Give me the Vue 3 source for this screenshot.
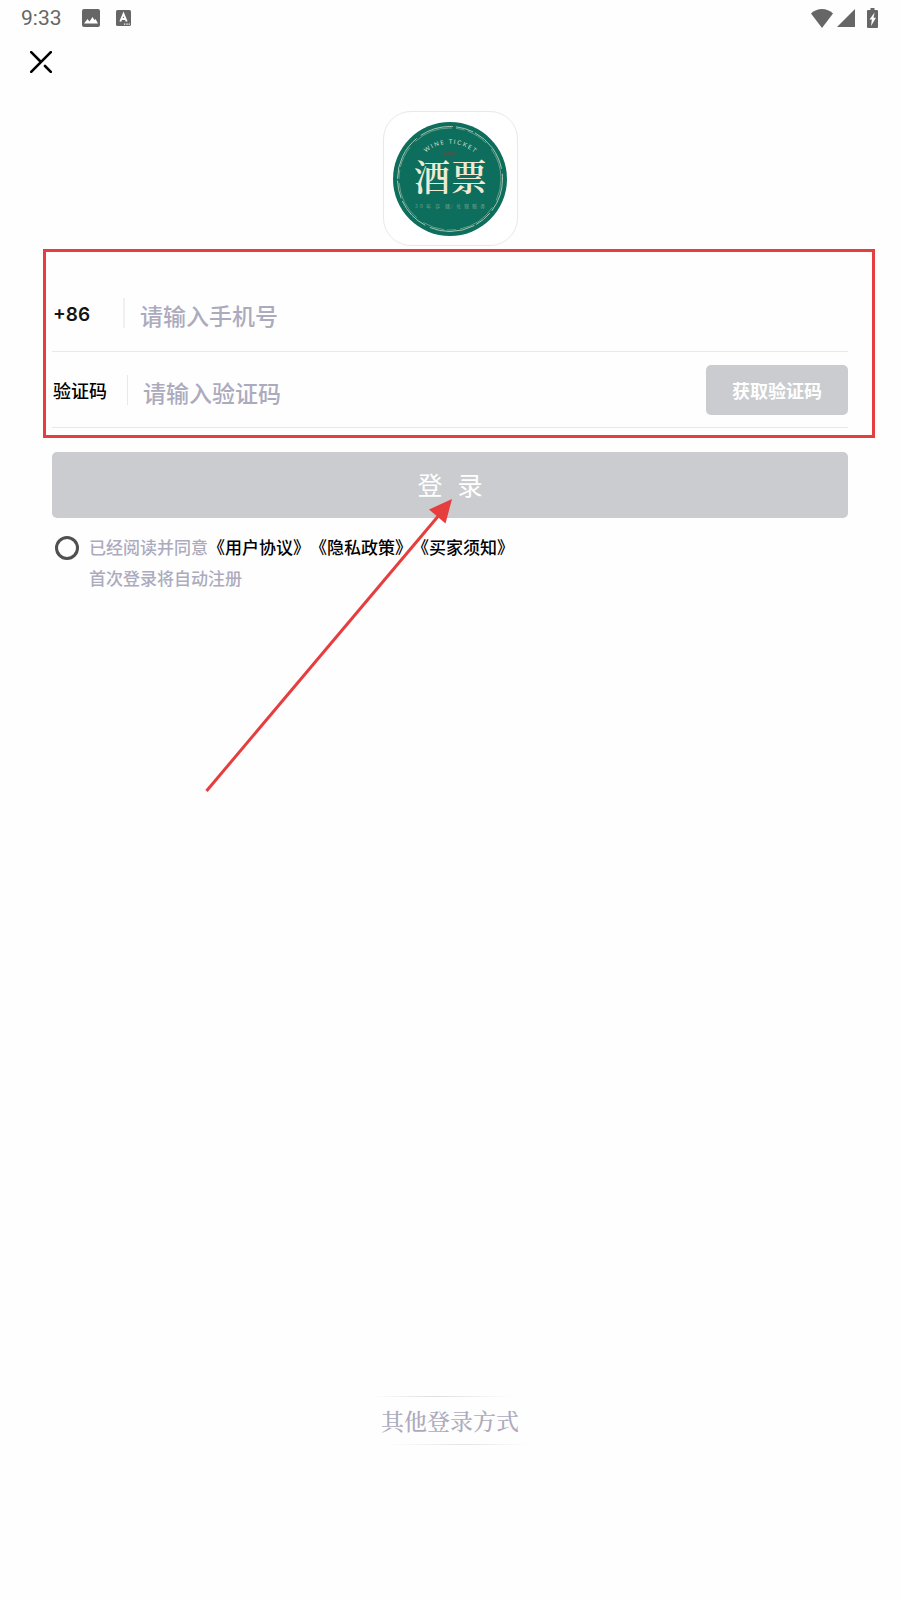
<script setup>
import { computed, ref } from 'vue'

const phone = ref('')
const code = ref('')
const agreed = ref(false)

const agreements = [
  { key: 'user', label: '《用户协议》' },
  { key: 'privacy', label: '《隐私政策》' },
  { key: 'buyer', label: '《买家须知》' }
]

const canLogin = computed(() => Boolean(phone.value.trim() && code.value.trim() && agreed.value))

function submitLogin() {
  if (!canLogin.value) {
    return
  }

  code.value = ''
}
</script>

<template>
  <div class="login-page">
    <header class="status-bar">
      <div class="status-bar__group">
        <span class="status-bar__time">9:33</span>
        <svg class="status-bar__image" viewBox="0 0 18 18" aria-hidden="true">
          <rect width="18" height="18" rx="2" fill="#666" />
          <path d="M2 14.5 5.5 10l2 2.5L10.5 8l2 3 1-1 2.5 4.5z" fill="#fff" />
        </svg>
        <svg class="status-bar__lang" viewBox="0 0 15 16" aria-hidden="true">
          <rect width="15" height="16" rx="1.5" fill="#666" />
          <path d="M4.3 11.5 7.5 4l3.2 7.5M5.5 9h4" fill="none" stroke="#fff" stroke-width="1.9" />
          <path d="M8 14.2h1.3M10.4 14.2h1.3M12.6 14.2h1.3" stroke="#fff" stroke-width="1.2" />
        </svg>
      </div>
      <div class="status-bar__group status-bar__group--end">
        <svg class="status-bar__wifi" viewBox="0 0 22 19" aria-hidden="true">
          <path d="M11 19 0 4.5C3 1.5 7 0 11 0s8 1.5 11 4.5z" fill="#666" />
        </svg>
        <svg class="status-bar__signal" viewBox="0 0 18 18" aria-hidden="true">
          <path d="M18 0v18H0z" fill="#666" />
        </svg>
        <svg class="status-bar__battery" viewBox="0 0 11 20" aria-hidden="true">
          <path d="M3.5 0h4v2H10q1 0 1 1v16q0 1-1 1H1q-1 0-1-1V3q0-1 1-1h2.5z" fill="#666" />
          <path d="M7.6 4.5 2.5 11.5h2.4L4 18 9 9.8H6.5z" fill="#fff" />
        </svg>
      </div>
    </header>

    <nav class="top-nav">
      <button class="top-nav__close" type="button" aria-label="关闭">
        <svg viewBox="0 0 22 22" aria-hidden="true">
          <path
            d="M1.2 1.2 11 11M20.8 1.2 1.2 20.8M15 15l5.8 5.8"
            fill="none"
            stroke="#000"
            stroke-width="2.6"
            stroke-linecap="round"
          />
        </svg>
      </button>
    </nav>

    <main class="login">
      <div class="logo">
        <svg class="logo__badge" viewBox="0 0 114 114" role="img" aria-label="酒票">
          <defs>
            <path id="logo-arc" d="M27 37A37 37 0 0 1 87 37" />
          </defs>
          <circle cx="57" cy="57" r="57" fill="#0d6e5d" />
          <circle cx="57" cy="57" r="52.5" fill="none" stroke="#a9c5ae" stroke-width="1" stroke-dasharray="34 3 18 2 46 5" />
          <circle cx="57" cy="57" r="51" fill="none" stroke="#87af9c" stroke-width="0.7" stroke-dasharray="22 8 40 4 9 3" />
          <text class="logo__arc-text" text-anchor="middle">
            <textPath href="#logo-arc" startOffset="50%">W I N E &#160; T I C K E T</textPath>
          </text>
          <rect x="50" y="29" width="13" height="4" fill="#4c554c" opacity="0.7" />
          <text class="logo__name" x="21 58" y="69">酒票</text>
          <text class="logo__slogan" x="22 27 33 42 52 58 63 71 79 87" y="86">30年存储/兑现服务</text>
        </svg>
      </div>

      <form class="login-form" @submit.prevent="submitLogin">
        <div class="fields">
          <div class="field field--phone">
            <label class="field__label field__label--prefix" for="phone">+86</label>
            <input id="phone" v-model="phone" class="field__input" type="tel" placeholder="请输入手机号">
          </div>
          <div class="field">
            <label class="field__label" for="code">验证码</label>
            <input id="code" v-model="code" class="field__input" type="text" placeholder="请输入验证码">
            <button class="field__send" type="button">获取验证码</button>
          </div>
        </div>

        <button class="login-form__submit" type="submit">
          <span>登</span>
          <span>录</span>
        </button>

        <div class="agreement">
          <input id="agree" v-model="agreed" class="agreement__check" type="checkbox">
          <div class="agreement__text">
            <p>
              <label for="agree">已经阅读并同意</label><a
                v-for="item in agreements"
                :key="item.key"
                :href="`#${item.key}`"
              >{{ item.label }}</a>
            </p>
            <p>首次登录将自动注册</p>
          </div>
        </div>
      </form>
    </main>

    <footer class="other-login">
      <button class="other-login__button" type="button">其他登录方式</button>
    </footer>

    <svg class="pointer-arrow" viewBox="0 0 246 293" aria-hidden="true">
      <path d="M0.5 292 234 15" fill="none" stroke="#e63e3e" stroke-width="3" />
      <path d="M246 0 223 10.5 239.5 24.5z" fill="#e63e3e" />
    </svg>
  </div>
</template>

<style>
body {
  margin: 0;
  background: #fefefe;
}
</style>

<style scoped>
.login-page {
  position: relative;
  display: flex;
  flex-direction: column;
  box-sizing: border-box;
  min-height: 100vh;
  overflow: hidden;
  background: #fefefe;
  color: #000;
  font-family: Roboto, 'Noto Sans CJK SC', sans-serif;
}

button,
input {
  font-family: inherit;
}

button {
  padding: 0;
  border: 0;
  cursor: pointer;
}

.status-bar {
  display: flex;
  align-items: center;
  justify-content: space-between;
  height: 36px;
  padding: 0 22px 0 21px;
}

.status-bar__group {
  display: flex;
  align-items: center;
}

.status-bar__group--end {
  gap: 4px;
}

.status-bar__time {
  margin-right: 20px;
  color: #666;
  font-size: 21px;
  line-height: 36px;
}

.status-bar__image {
  width: 18px;
  height: 18px;
  margin-right: 16px;
}

.status-bar__lang {
  width: 15px;
  height: 16px;
}

.status-bar__wifi {
  width: 22px;
  height: 19px;
}

.status-bar__signal {
  width: 18px;
  height: 18px;
}

.status-bar__battery {
  width: 11px;
  height: 20px;
  margin-left: 8px;
}

.top-nav {
  display: flex;
  height: 75px;
  padding: 0 30px;
  box-sizing: border-box;
}

.top-nav__close {
  width: 22px;
  height: 22px;
  margin-top: 15px;
  background: none;
}

.top-nav__close svg {
  display: block;
  width: 22px;
  height: 22px;
}

.login {
  padding: 0 52px;
}

.logo {
  display: flex;
  align-items: center;
  justify-content: center;
  box-sizing: border-box;
  width: 135px;
  height: 135px;
  margin: 0 auto;
  border: 1px solid #e8e8e8;
  border-radius: 28px;
  background: #fff;
}

.logo__badge {
  width: 114px;
  height: 114px;
}

.logo__arc-text {
  fill: #d5dfc9;
  font-family: Lato, sans-serif;
  font-size: 6px;
}

.logo__name {
  fill: #f0ead4;
  font-family: 'Noto Serif CJK SC', 'Noto Sans CJK SC', serif;
  font-size: 36px;
  font-weight: 600;
}

.logo__slogan {
  fill: #83ab94;
  font-family: 'Noto Serif CJK SC', 'Noto Sans CJK SC', serif;
  font-size: 5px;
}

.fields {
  position: relative;
  padding-top: 28px;
}

/* red frame drawn round both fields */
.fields::after {
  position: absolute;
  inset: 3px -27px -10px -9px;
  border: 3px solid #e63e3e;
  content: '';
  pointer-events: none;
}

.field {
  display: flex;
  align-items: center;
  box-sizing: border-box;
  height: 76px;
  border-bottom: 1px solid #e8e8e8;
}

.field--phone {
  height: 78px;
}

.field__label {
  box-sizing: border-box;
  width: 76px;
  padding: 4px 0 0 1px;
  border-right: 1px solid #e8e8e8;
  font-size: 18px;
  font-weight: 500;
  line-height: 26px;
}

.field__label--prefix {
  width: 73px;
  border-right: 2px solid #f0f0f0;
  color: #151515;
  font-family: Inter, sans-serif;
  font-size: 19px;
  font-weight: 600;
}

.field__input {
  flex: 1;
  box-sizing: border-box;
  min-width: 0;
  height: 60px;
  padding: 9px 0 0 15px;
  border: 0;
  outline: none;
  background: transparent;
  color: #000;
  font-size: 23px;
  font-weight: 500;
}

.field__input::placeholder {
  color: #acabbd;
  opacity: 1;
}

.field__send {
  width: 142px;
  height: 50px;
  border-radius: 5px;
  background: #cbccd0;
  color: #fff;
  font-size: 18px;
  font-weight: 700;
}

.login-form__submit {
  display: flex;
  align-items: center;
  justify-content: center;
  gap: 15px;
  box-sizing: border-box;
  width: 100%;
  height: 66px;
  margin-top: 24px;
  padding-bottom: 3px;
  border-radius: 5px;
  background: #cbccd0;
  color: #fff;
  font-size: 25px;
}

.agreement {
  display: flex;
  align-items: flex-start;
  gap: 10px;
  margin-top: 15px;
  padding-left: 3px;
}

.agreement__check {
  flex-shrink: 0;
  box-sizing: border-box;
  width: 24px;
  height: 24px;
  margin: 3px 0 0;
  border: 3px solid #505050;
  border-radius: 50%;
  appearance: none;
}

.agreement__check:checked {
  background: #505050;
}

.agreement__text {
  color: #acabbd;
  font-size: 17px;
  font-weight: 500;
  line-height: 31px;
  text-spacing-trim: space-all;
}

.agreement__text p {
  margin: 0;
}

.agreement__text a {
  color: #000;
  text-decoration: none;
}

.other-login {
  display: flex;
  justify-content: center;
  margin-top: auto;
  padding-bottom: 155px;
}

.other-login__button {
  padding: 0 10px;
  background:
    linear-gradient(90deg, transparent, #dedede 40%, transparent 90%) top / 100% 1px no-repeat,
    linear-gradient(90deg, transparent 10%, #e4e4e4 60%, transparent) bottom / 100% 1px no-repeat;
  color: #acabbd;
  font-family: 'Noto Serif CJK SC', 'Noto Sans CJK SC', serif;
  font-size: 23px;
  font-weight: 500;
  line-height: 49px;
}

.pointer-arrow {
  position: absolute;
  top: 499px;
  left: 206px;
  width: 246px;
  height: 293px;
  overflow: visible;
  pointer-events: none;
}
</style>
